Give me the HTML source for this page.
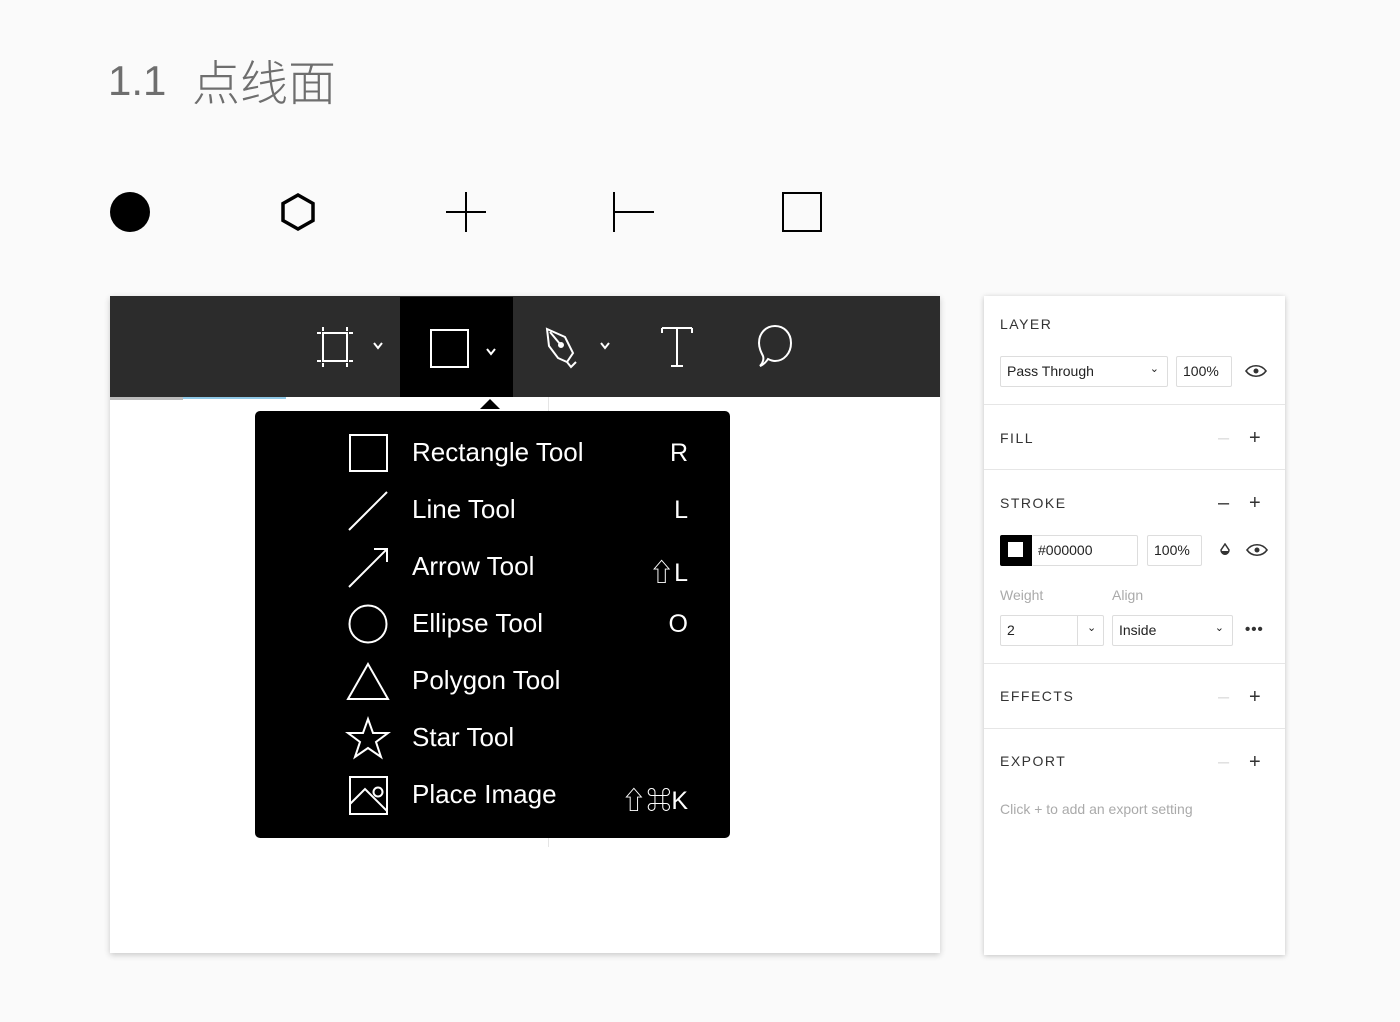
<!DOCTYPE html>
<html><head><meta charset="utf-8"><style>
*{margin:0;padding:0;box-sizing:border-box}
body{width:1400px;height:1022px;background:#fafafa;position:relative;overflow:hidden;font-family:"Liberation Sans","Noto Sans CJK SC",sans-serif}
.abs{position:absolute}
.title{color:#6e6e6e;font-weight:300;font-family:"Liberation Sans","Noto Sans CJK SC",sans-serif;white-space:nowrap}
.canvas{left:110px;top:296px;width:830px;height:657px;background:#fff;box-shadow:0 2px 6px rgba(0,0,0,.2)}
.tb{left:110px;top:296px;width:830px;height:101px;background:#2c2c2c}
.menu{left:255px;top:411px;width:475px;height:427px;background:#000;border-radius:5px}
.mi{position:absolute;left:157px;color:#fff;font-size:26px;top:2px}
.sc{position:absolute;right:42px;color:#fff;font-size:25px}
.panel{left:984px;top:296px;width:301px;height:659px;background:#fff;box-shadow:0 1px 5px rgba(0,0,0,.22)}
.h{position:absolute;left:16px;font-size:14px;letter-spacing:1.5px;color:#333}
.div{position:absolute;left:0;width:301px;height:1px;background:#e6e6e6}
.box{position:absolute;border:1px solid #ddd;border-radius:2px;font-size:14px;color:#222;padding:6px 6px;height:31px}
.pm{position:absolute;font-size:20px;color:#333;font-weight:300}
</style></head><body>
<div class="abs title" style="left:108px;top:57px;font-size:42px">1.1</div>
<div class="abs title" style="left:192px;top:44px;font-size:48px">点线面</div>
<svg class="abs" style="left:100px;top:180px" width="740" height="64">
<circle cx="30" cy="32" r="20" fill="#000"/>
<polygon points="198,15 213,23.5 213,40.5 198,49 183,40.5 183,23.5" fill="none" stroke="#000" stroke-width="3.5"/>
<path d="M346 32H386M366 12V52" stroke="#000" stroke-width="2"/>
<path d="M514 12V52M514 32H554" stroke="#000" stroke-width="2"/>
<rect x="683" y="13" width="38" height="38" fill="none" stroke="#000" stroke-width="2"/>
</svg>
<div class="abs canvas"></div>
<div class="abs" style="left:548px;top:397px;width:1px;height:450px;background:#e5e5e5"></div>
<div class="abs" style="left:110px;top:397px;width:73px;height:3px;background:#bbb"></div>
<div class="abs" style="left:183px;top:397px;width:103px;height:2px;background:#8fc8e6"></div>
<div class="abs tb"></div>
<div class="abs" style="left:400px;top:297px;width:113px;height:100px;background:#000"></div>
<svg class="abs" style="left:110px;top:296px" width="830" height="120">
<g stroke="#fff" stroke-width="2" fill="none">
<rect x="213" y="37" width="24" height="28"/>
<path d="M207 37h4M239 37h4M207 65h4M239 65h4M213 31v4M237 31v4M213 67v4M237 67v4"/>
<path d="M264 47l4 5 4-5M377 53l4 5 4-5M491 47l4 5 4-5" stroke-width="2"/>
<rect x="321" y="34" width="37" height="37"/>
<path d="M437 33l18 8 8 16 -6 9 -9-4 -9-12z M440 36l10 12 M457 66l4 5 5-5"/>
<circle cx="451" cy="49" r="2" fill="#fff"/>
<path d="M552 32h30M567 32v38M561 70h12M552 32v5M582 32v5"/>
<path d="M650 70c3-3 4-7 3-10-2-4-4-8-4-13 0-10 7-17 16-17s16 7 16 17-7 18-16 18c-3 0-5-1-7-2-2 3-5 6-8 7z"/>
</g>
<polygon points="370,113 380,103 390,113" fill="#000"/>
</svg>
<div class="abs menu">
<svg class="abs" style="left:0;top:0" width="150" height="427">
<g stroke="#fff" stroke-width="2" fill="none">
<rect x="95" y="24" width="37" height="36"/>
<path d="M94 119l38-38"/>
<path d="M94 176l38-38M119 138h13v13"/>
<circle cx="113" cy="213" r="18.5"/>
<path d="M113 253l-20 35h40z"/>
<path d="M113 308l5 14h15l-12 9 5 15-13-9-13 9 5-15-12-9h15z"/>
<rect x="95" y="366" width="37" height="37"/><path d="M95 393l15-15 22 22"/><circle cx="123" cy="381" r="4.5"/>
</g></svg>
<div class="mi" style="top:26px">Rectangle Tool</div><div class="sc" style="top:28px">R</div>
<div class="mi" style="top:83px">Line Tool</div><div class="sc" style="top:85px">L</div>
<div class="mi" style="top:140px">Arrow Tool</div><div class="sc" style="top:142px">⇧L</div>
<div class="mi" style="top:197px">Ellipse Tool</div><div class="sc" style="top:199px">O</div>
<div class="mi" style="top:254px">Polygon Tool</div>
<div class="mi" style="top:311px">Star Tool</div>
<div class="mi" style="top:368px">Place Image</div><div class="sc" style="top:370px">⇧⌘K</div>
</div>
<div class="abs panel">
<div class="h" style="top:20px">LAYER</div>
<div class="box" style="left:16px;top:60px;width:168px">Pass Through<span style="position:absolute;right:8px;top:5px;font-size:11px">⌄</span></div>
<div class="box" style="left:192px;top:60px;width:56px">100%</div>
<svg class="abs" style="left:261px;top:68px" width="22" height="14"><path d="M1 7c5-7 15-7 20 0-5 7-15 7-20 0z" fill="none" stroke="#333" stroke-width="1.6"/><circle cx="11" cy="7" r="2.5" fill="#333"/></svg>
<div class="div" style="top:108px"></div>
<div class="h" style="top:134px">FILL</div>
<div class="pm" style="left:234px;top:131px;color:#ddd">–</div><div class="pm" style="left:265px;top:131px">+</div>
<div class="div" style="top:173px"></div>
<div class="h" style="top:199px">STROKE</div>
<div class="pm" style="left:234px;top:196px">–</div><div class="pm" style="left:265px;top:196px">+</div>
<div class="abs" style="left:16px;top:239px;width:32px;height:31px;background:#000;border-radius:2px 0 0 2px"></div>
<div class="abs" style="left:24px;top:246px;width:15px;height:15px;background:#fff"></div>
<div class="box" style="left:48px;top:239px;width:106px;border-left:none">#000000</div>
<div class="box" style="left:163px;top:239px;width:55px">100%</div>
<svg class="abs" style="left:235px;top:247px" width="12" height="14"><path d="M6 1L2 7a4 4 0 0 0 8 0z" fill="none" stroke="#333" stroke-width="1.5"/><path d="M2 8h8a4 4 0 0 1-8 0z" fill="#333"/></svg>
<svg class="abs" style="left:262px;top:247px" width="22" height="14"><path d="M1 7c5-7 15-7 20 0-5 7-15 7-20 0z" fill="none" stroke="#333" stroke-width="1.6"/><circle cx="11" cy="7" r="2.5" fill="#333"/></svg>
<div class="abs" style="left:16px;top:291px;font-size:14px;color:#aaa">Weight</div>
<div class="abs" style="left:128px;top:291px;font-size:14px;color:#aaa">Align</div>
<div class="box" style="left:16px;top:319px;width:104px">2<span style="position:absolute;left:76px;top:0;height:29px;border-left:1px solid #ddd;padding:5px 0 0 9px;font-size:11px">⌄</span></div>
<div class="box" style="left:128px;top:319px;width:121px">Inside<span style="position:absolute;right:8px;top:5px;font-size:11px">⌄</span></div>
<div class="abs" style="left:261px;top:325px;font-size:15px;color:#333;letter-spacing:1px;font-weight:bold">•••</div>
<div class="div" style="top:367px"></div>
<div class="h" style="top:392px">EFFECTS</div>
<div class="pm" style="left:234px;top:390px;color:#ddd">–</div><div class="pm" style="left:265px;top:390px">+</div>
<div class="div" style="top:432px"></div>
<div class="h" style="top:457px">EXPORT</div>
<div class="pm" style="left:234px;top:455px;color:#ddd">–</div><div class="pm" style="left:265px;top:455px">+</div>
<div class="abs" style="left:16px;top:505px;font-size:14px;color:#aaa">Click + to add an export setting</div>
</div>
</body></html>
